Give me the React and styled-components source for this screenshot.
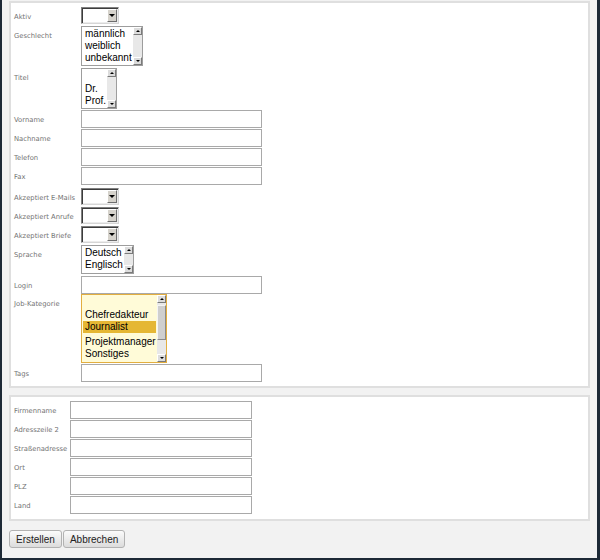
import React from 'react';
import styled, { createGlobalStyle } from 'styled-components';

const GlobalStyle = createGlobalStyle`
  html, body {
    margin: 0;
    padding: 0;
    background: #f2f2f2;
  }
  * {
    box-sizing: border-box;
  }
`;

const Frame = styled.div`
  width: 600px;
  height: 560px;
  display: flex;
  flex-direction: column;
  padding: 1px 7px 0 7px;
  background: #f2f2f2;
  border-left: 2px solid #1d2936;
  border-right: 3px solid #1d2936;
  border-bottom: 2px solid #1d2936;
  font-family: "Liberation Sans", Arial, sans-serif;
`;

const Panel = styled.div`
  display: flex;
  flex-direction: column;
  margin-top: ${p => p.$mt || 0}px;
  padding: 0 0 ${p => p.$pb}px 3px;
  background: #fff;
  border: 2px solid #dfdfdf;
`;

const Row = styled.div`
  display: grid;
  grid-template-columns: ${p => p.$labelWidth}px auto;
  align-items: start;
  margin-top: ${p => p.$mt ?? 1}px;
`;

const Label = styled.div`
  padding-top: 5px;
  font-family: "DejaVu Sans", Verdana, sans-serif;
  font-size: 6.8px;
  line-height: 10px;
  color: #737373;
  white-space: nowrap;
`;

const TextInput = styled.input`
  width: ${p => p.$w || 181}px;
  height: 18px;
  margin: 0;
  padding: 0 2px;
  border: 1px solid #a9a9a9;
  background: #fff;
  outline: none;
`;

const Dropdown = styled.div`
  display: flex;
  justify-content: flex-end;
  width: 38px;
  height: 17px;
  padding: 1px;
  background: #fff;
  border-top: 1px solid #808080;
  border-left: 1px solid #808080;
  border-right: 1px solid #d6d6d6;
  border-bottom: 1px solid #d6d6d6;
  box-shadow: inset 1px 1px 0 #3c3c3c, inset -1px -1px 0 #ececec;
`;

const DropButton = styled.div`
  display: flex;
  align-items: center;
  justify-content: center;
  width: 10px;
  height: 100%;
  background: #d6d3cc;
  border: 1px solid;
  border-color: #fff #6e6e6e #6e6e6e #fff;

  &::after {
    content: '';
    border-left: 3px solid transparent;
    border-right: 3px solid transparent;
    border-top: 3px solid #000;
  }
`;

const ListBox = styled.div`
  display: flex;
  width: ${p => p.$w}px;
  height: ${p => p.$h}px;
  border: 1px solid ${p => (p.$active ? '#e2ae40' : '#9d9d9d')};
  background: ${p => (p.$active ? '#fffbd8' : '#fff')};
`;

const Options = styled.div`
  flex: 1;
  padding: ${p => p.$pt ?? 1}px 1px 0 1px;
  overflow: hidden;
`;

const Option = styled.div`
  height: 12px;
  margin-bottom: ${p => (p.$selected ? 3 : 0)}px;
  padding-left: 2px;
  font-size: 10px;
  line-height: 12px;
  color: #000;
  white-space: nowrap;
  background: ${p => (p.$selected ? '#e5b734' : 'transparent')};
`;

const ScrollBar = styled.div`
  display: flex;
  flex-direction: column;
  width: 9px;
  background: #e8e8e8;
`;

const ScrollButton = styled.div`
  display: flex;
  align-items: center;
  justify-content: center;
  height: 8px;
  margin-top: ${p => (p.$down ? 'auto' : '0')};
  background: #dcdcdc;
  border: 1px solid;
  border-color: #fff #7a7a7a #7a7a7a #fff;

  &::after {
    content: '';
    border-left: 2px solid transparent;
    border-right: 2px solid transparent;
    ${p => (p.$down ? 'border-top: 2px solid #000;' : 'border-bottom: 2px solid #000;')}
  }
`;

const Thumb = styled.div`
  height: ${p => p.$h}px;
  margin-top: 2px;
  background: #cfcfcf;
  border: 1px solid;
  border-color: #f4f4f4 #8a8a8a #8a8a8a #f4f4f4;
`;

const ButtonBar = styled.div`
  display: flex;
  gap: 1px;
  margin-top: 9px;
`;

const Button = styled.button`
  height: 18px;
  padding: 0 6px;
  font-family: "Liberation Sans", Arial, sans-serif;
  font-size: 10px;
  color: #222;
  background: linear-gradient(#fbfbfb, #dcdcdc);
  border: 1px solid #b2b2b2;
  border-radius: 3px;
`;

const Select = () => (
  <Dropdown>
    <DropButton />
  </Dropdown>
);

const List = ({ w, h, items, pt, active, selected, thumb }) => (
  <ListBox $w={w} $h={h} $active={active}>
    <Options $pt={pt}>
      {items.map((item, i) => (
        <Option key={i} $selected={item === selected}>
          {item || '\u00a0'}
        </Option>
      ))}
    </Options>
    <ScrollBar>
      <ScrollButton />
      {thumb && <Thumb $h={thumb} />}
      <ScrollButton $down />
    </ScrollBar>
  </ListBox>
);

const companyFields = ['Firmenname', 'Adresszeile 2', 'Straßenadresse', 'Ort', 'PLZ', 'Land'];

export default function App() {
  return (
    <>
      <GlobalStyle />
      <Frame>
        <Panel $pb={4}>
          <Row $labelWidth={67} $mt={4}>
            <Label>Aktiv</Label>
            <Select />
          </Row>
          <Row $labelWidth={67} $mt={2}>
            <Label>Geschlecht</Label>
            <List w={62} h={40} items={['männlich', 'weiblich', 'unbekannt']} />
          </Row>
          <Row $labelWidth={67} $mt={2}>
            <Label>Titel</Label>
            <List w={36} h={41} pt={2} items={['', 'Dr.', 'Prof.']} />
          </Row>
          <Row $labelWidth={67} $mt={1}>
            <Label>Vorname</Label>
            <TextInput />
          </Row>
          <Row $labelWidth={67}>
            <Label>Nachname</Label>
            <TextInput />
          </Row>
          <Row $labelWidth={67}>
            <Label>Telefon</Label>
            <TextInput />
          </Row>
          <Row $labelWidth={67}>
            <Label>Fax</Label>
            <TextInput />
          </Row>
          <Row $labelWidth={67} $mt={3}>
            <Label>Akzeptiert E-Mails</Label>
            <Select />
          </Row>
          <Row $labelWidth={67} $mt={2}>
            <Label>Akzeptiert Anrufe</Label>
            <Select />
          </Row>
          <Row $labelWidth={67} $mt={2}>
            <Label>Akzeptiert Briefe</Label>
            <Select />
          </Row>
          <Row $labelWidth={67} $mt={2}>
            <Label>Sprache</Label>
            <List w={53} h={29} items={['Deutsch', 'Englisch']} />
          </Row>
          <Row $labelWidth={67} $mt={2}>
            <Label>Login</Label>
            <TextInput />
          </Row>
          <Row $labelWidth={67} $mt={0}>
            <Label>Job-Kategorie</Label>
            <List
              w={86}
              h={69}
              pt={2}
              active
              thumb={35}
              selected="Journalist"
              items={['', 'Chefredakteur', 'Journalist', 'Projektmanager', 'Sonstiges']}
            />
          </Row>
          <Row $labelWidth={67}>
            <Label>Tags</Label>
            <TextInput />
          </Row>
        </Panel>

        <Panel $mt={7} $pb={5}>
          {companyFields.map((name, i) => (
            <Row key={name} $labelWidth={56} $mt={i === 0 ? 4 : 1}>
              <Label>{name}</Label>
              <TextInput $w={182} />
            </Row>
          ))}
        </Panel>

        <ButtonBar>
          <Button>Erstellen</Button>
          <Button>Abbrechen</Button>
        </ButtonBar>
      </Frame>
    </>
  );
}
